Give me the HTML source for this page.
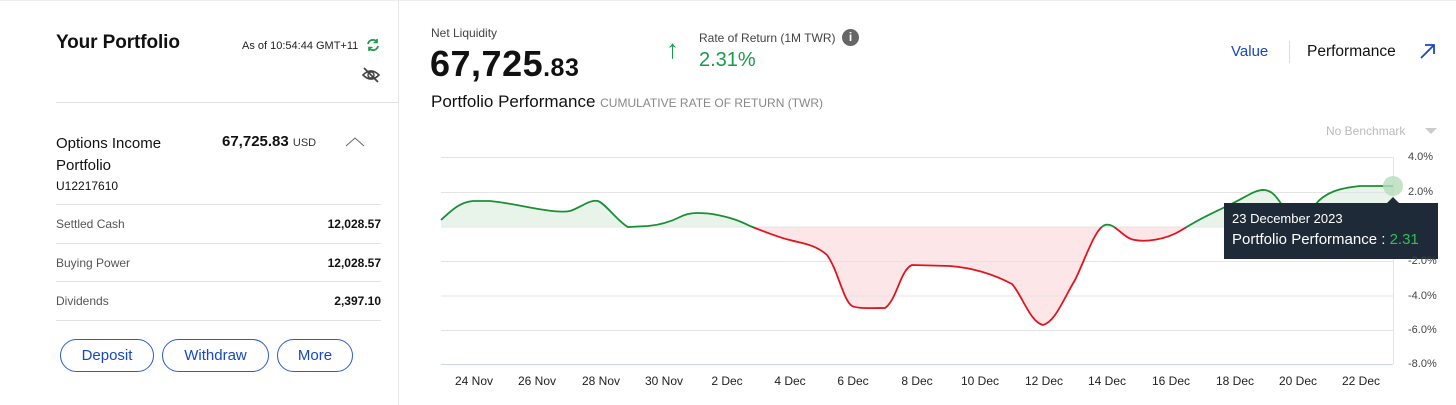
<!DOCTYPE html>
<html><head><meta charset="utf-8"><style>
*{margin:0;padding:0;box-sizing:border-box}
body{width:1456px;height:405px;background:#fff;font-family:"Liberation Sans",sans-serif;color:#111;position:relative;overflow:hidden}
.a{position:absolute;white-space:nowrap}
.hr{position:absolute;height:1px;background:#e2e2e2}
.btn{position:absolute;top:339px;height:33px;border:1.3px solid #2a5bd7;border-radius:17px;color:#1746c8;font-size:15px;text-align:center;line-height:31px}
.xl{position:absolute;top:374px;font-size:12px;color:#222;transform:translateX(-50%)}
.yl{position:absolute;left:1408px;font-size:11px;color:#444}
</style></head><body>
<div style="position:absolute;left:0;top:0;width:1456px;height:1px;background:#eee"></div>
<div style="position:absolute;left:398px;top:0;width:1px;height:405px;background:#e6e6e6"></div>

<div class="a" style="left:56px;top:32px;font-size:19px;font-weight:bold;letter-spacing:-0.1px">Your Portfolio</div>
<div class="a" style="left:242px;top:40px;font-size:11px;color:#222">As of 10:54:44 GMT+11</div>
<svg class="a" style="left:366px;top:38px" width="14" height="14" viewBox="0 0 14 14"><path d="M2 6A5 5 0 0 1 11 4M12 8A5 5 0 0 1 3 10" stroke="#1a9a4a" stroke-width="1.8" fill="none"/><path d="M11 1v3.5H7.5M3 13V9.5h3.5" stroke="#1a9a4a" stroke-width="1.6" fill="none"/></svg>
<svg class="a" style="left:361px;top:66px" width="20" height="18" viewBox="0 0 20 18"><path d="M2 9Q10 1 18 9Q10 17 2 9Z" stroke="#444" stroke-width="1.6" fill="none"/><circle cx="10" cy="9" r="3" stroke="#444" stroke-width="1.5" fill="none"/><path d="M3 2L17 16" stroke="#444" stroke-width="1.8"/></svg>
<div class="hr" style="left:56px;top:102px;width:342px"></div>

<div class="a" style="left:56px;top:133px;font-size:15px;line-height:22px">Options Income<br>Portfolio</div>
<div class="a" style="left:56px;top:179px;font-size:12px">U12217610</div>
<div class="a" style="left:222px;top:133px;font-size:15px;font-weight:bold">67,725.83 <span style="font-size:11px;font-weight:normal;color:#333">USD</span></div>
<svg class="a" style="left:345px;top:137px" width="20" height="10"><path d="M1 9L10 1L19 9" stroke="#666" stroke-width="1" fill="none"/></svg>
<div class="hr" style="left:56px;top:204px;width:325px"></div>
<div class="a" style="left:56px;top:217px;font-size:12px;color:#555">Settled Cash</div>
<div class="a" style="right:1075px;top:217px;font-size:12px;font-weight:bold">12,028.57</div>
<div class="hr" style="left:56px;top:243px;width:325px"></div>
<div class="a" style="left:56px;top:256px;font-size:12px;color:#555">Buying Power</div>
<div class="a" style="right:1075px;top:256px;font-size:12px;font-weight:bold">12,028.57</div>
<div class="hr" style="left:56px;top:281px;width:325px"></div>
<div class="a" style="left:56px;top:294px;font-size:12px;color:#555">Dividends</div>
<div class="a" style="right:1075px;top:294px;font-size:12px;font-weight:bold">2,397.10</div>
<div class="hr" style="left:56px;top:320px;width:325px"></div>
<div class="btn" style="left:60px;width:94px">Deposit</div>
<div class="btn" style="left:162px;width:107px">Withdraw</div>
<div class="btn" style="left:277px;width:76px">More</div>

<div class="a" style="left:431px;top:26px;font-size:12px;color:#444">Net Liquidity</div>
<div class="a" style="left:430px;top:43px;font-size:36px;font-weight:bold;letter-spacing:0.5px">67,725<span style="font-size:25px">.83</span></div>
<div class="a" style="left:431px;top:92px;font-size:17px">Portfolio Performance <span style="font-size:12px;color:#888">CUMULATIVE RATE OF RETURN (TWR)</span></div>
<div class="a" style="left:666px;top:34px;font-size:26px;color:#1a9a4a">↑</div>
<div class="a" style="left:699px;top:31px;font-size:12px;color:#444">Rate of Return (1M TWR)</div>
<div class="a" style="left:842px;top:29px;width:17px;height:17px;border-radius:50%;background:#666;color:#fff;font-size:12px;font-weight:bold;text-align:center;line-height:17px">i</div>
<div class="a" style="left:699px;top:49px;font-size:20px;color:#1a9a4a">2.31%</div>

<div class="a" style="left:1231px;top:43px;font-size:15px;color:#1746c8">Value</div>
<div style="position:absolute;left:1289px;top:41px;width:1px;height:22px;background:#ddd"></div>
<div class="a" style="left:1307px;top:43px;font-size:15.5px">Performance</div>
<svg class="a" style="left:1419px;top:43px" width="17" height="17"><path d="M2 15L15 2M6 2H15V11" stroke="#1746c8" stroke-width="1.8" fill="none"/></svg>
<div class="a" style="left:1326px;top:124px;font-size:12px;color:#bbb">No Benchmark</div>
<svg class="a" style="left:1425px;top:128px" width="12" height="7"><path d="M0 0H12L6 6Z" fill="#ccc"/></svg>

<svg class="a" style="left:0;top:0" width="1456" height="405">
<defs>
<clipPath id="up"><rect x="0" y="0" width="1456" height="227"/></clipPath>
<clipPath id="dn"><rect x="0" y="227" width="1456" height="200"/></clipPath>
<path id="ar" d="M441 227L441 220C452 210 460 202 473 201L490 201C510 203 530 208 545 210C558 212 565 212 570 211C580 208 590 199 598 201C606 204 618 222 628 227L648 226C660 225 670 222 680 217C688 213 695 212 712 214C730 217 740 221 750 226C765 232 780 238 790 240C800 243 815 244 827 255C838 270 843 300 852 306C858 309 875 308 885 308C897 300 900 270 912 265L950 266C975 268 995 275 1012 284C1022 295 1030 322 1043 325C1055 322 1063 300 1075 280C1085 260 1095 228 1105 225C1115 222 1122 238 1135 240C1145 242 1165 240 1180 231L1190 225C1205 216 1215 212 1225 207C1245 198 1255 189 1265 190C1272 191 1276 196 1282 205L1315 205C1325 192 1340 188 1360 186L1393 186L1393 227Z"/>
<path id="ln" d="M441 220C452 210 460 202 473 201L490 201C510 203 530 208 545 210C558 212 565 212 570 211C580 208 590 199 598 201C606 204 618 222 628 227L648 226C660 225 670 222 680 217C688 213 695 212 712 214C730 217 740 221 750 226C765 232 780 238 790 240C800 243 815 244 827 255C838 270 843 300 852 306C858 309 875 308 885 308C897 300 900 270 912 265L950 266C975 268 995 275 1012 284C1022 295 1030 322 1043 325C1055 322 1063 300 1075 280C1085 260 1095 228 1105 225C1115 222 1122 238 1135 240C1145 242 1165 240 1180 231L1190 225C1205 216 1215 212 1225 207C1245 198 1255 189 1265 190C1272 191 1276 196 1282 205L1315 205C1325 192 1340 188 1360 186L1393 186"/>
</defs>
<use href="#ar" fill="#e8f4ea" clip-path="url(#up)"/>
<use href="#ar" fill="#fde6e7" clip-path="url(#dn)"/>
<g stroke="#e4e4e4" stroke-width="1">
<line x1="441" y1="157.5" x2="1393" y2="157.5"/><line x1="441" y1="192.5" x2="1393" y2="192.5"/><line x1="441" y1="227" x2="1393" y2="227"/><line x1="441" y1="261.5" x2="1393" y2="261.5"/><line x1="441" y1="296" x2="1393" y2="296"/><line x1="441" y1="330.5" x2="1393" y2="330.5"/>
<line x1="1393.5" y1="157" x2="1393.5" y2="364"/>
</g>
<line x1="441" y1="364.5" x2="1393" y2="364.5" stroke="#c9d6ee"/>
<use href="#ln" fill="none" stroke-width="1.8" stroke="#1a8f35" clip-path="url(#up)"/>
<use href="#ln" fill="none" stroke-width="1.8" stroke="#e0141e" clip-path="url(#dn)"/>
<circle cx="1393" cy="186" r="10" fill="#b5dcbc" opacity="0.8"/>
<path d="M1224 203H1387L1393 197L1399 203H1438V259H1224Z" fill="#1f2a38"/>
</svg>
<div class="a" style="left:1232px;top:211px;font-size:13px;color:#fff">23 December 2023</div>
<div class="a" style="left:1232px;top:231px;font-size:15px;color:#fff">Portfolio Performance : <span style="color:#2fbf57">2.31</span></div>

<div class="yl" style="top:151px">4.0%</div>
<div class="yl" style="top:186px">2.0%</div>
<div class="yl" style="top:255px">-2.0%</div>
<div class="yl" style="top:290px">-4.0%</div>
<div class="yl" style="top:324px">-6.0%</div>
<div class="yl" style="top:358px">-8.0%</div>

<div class="xl" style="left:474px">24 Nov</div><div class="xl" style="left:537px">26 Nov</div><div class="xl" style="left:601px">28 Nov</div><div class="xl" style="left:664px">30 Nov</div><div class="xl" style="left:727px">2 Dec</div><div class="xl" style="left:790px">4 Dec</div><div class="xl" style="left:853px">6 Dec</div><div class="xl" style="left:917px">8 Dec</div><div class="xl" style="left:980px">10 Dec</div><div class="xl" style="left:1044px">12 Dec</div><div class="xl" style="left:1107px">14 Dec</div><div class="xl" style="left:1171px">16 Dec</div><div class="xl" style="left:1235px">18 Dec</div><div class="xl" style="left:1298px">20 Dec</div><div class="xl" style="left:1361px">22 Dec</div>
</body></html>
